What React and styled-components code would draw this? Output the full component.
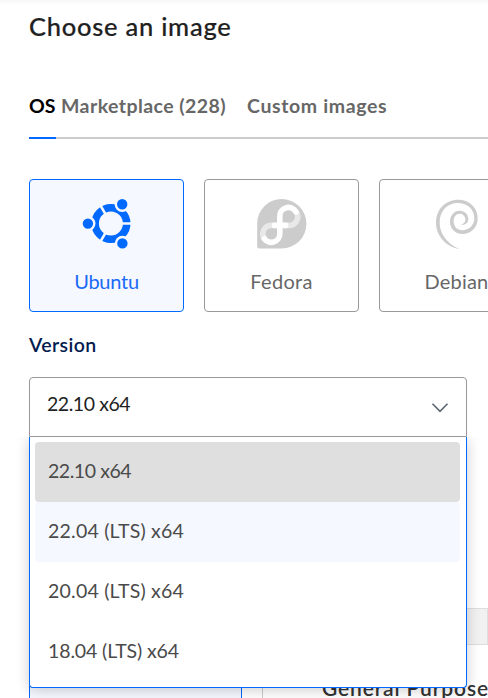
import React from "react";
import styled, { createGlobalStyle, css } from "styled-components";

const GlobalStyle = createGlobalStyle`
  *, *::before, *::after { box-sizing: border-box; }
  body {
    margin: 0;
    background: #fff;
    font-family: Lato, "Open Sans", sans-serif;
    overflow: hidden;
  }
`;

const Page = styled.main`
  width: 488px;
  height: 698px;
  padding-left: 29px;
  overflow: hidden;
  background: linear-gradient(#f7f7f7, #fff 5px);
`;

const Title = styled.h1`
  margin: 0;
  padding-top: 11px;
  height: 94px;
  font-size: 25.5px;
  line-height: 30px;
  font-weight: 500;
  letter-spacing: 0.74px;
  color: #1f1f1f;
  -webkit-text-stroke: 0.2px #1f1f1f;
  white-space: nowrap;
`;

const Tabs = styled.nav`
  display: flex;
  height: 45px;
  border-bottom: 2px solid #ccc;
`;

const Tab = styled.button`
  flex: none;
  height: 45px;
  margin: 0 ${(p) => p.$gap}px 0 0;
  padding: 0 0 20px;
  border: 0;
  border-bottom: 2px solid ${(p) => (p.$active ? "#0069ff" : "transparent")};
  background: none;
  font: 700 19.5px/24px Lato, sans-serif;
  letter-spacing: ${(p) => p.$track}px;
  color: ${(p) => (p.$active ? "#000" : "#676767")};
  white-space: nowrap;
  width: ${(p) => p.$width}px;
  text-align: left;
`;

const Distros = styled.div`
  display: flex;
  gap: 20px;
  margin-top: 40px;
`;

const DistroCard = styled.button`
  flex: none;
  display: flex;
  flex-direction: column;
  align-items: center;
  width: 155px;
  height: 133px;
  padding: 18px 0 0;
  border: 1px solid #999;
  border-radius: 4px;
  background: #fff;
  color: #676767;
  font: 400 20px/26px Lato, sans-serif;
  letter-spacing: ${(p) => p.$track}px;
  ${(p) =>
    p.$selected &&
    css`
      border-color: #0069ff;
      background: #f5f8ff;
      color: #1a6af5;
    `}
`;

const Logo = styled.svg`
  display: block;
  width: 52px;
  height: 52px;
  margin-bottom: 18px;
`;

const FieldLabel = styled.h2`
  margin: 20px 0 0;
  height: 45px;
  font-size: 19.5px;
  line-height: 26px;
  font-weight: 600;
  letter-spacing: 0.4px;
  color: #031b4e;
`;

const Select = styled.div`
  position: relative;
  display: flex;
  justify-content: space-between;
  width: 438px;
  height: 60px;
  padding: 13px 17px 0;
  border: 1px solid #999;
  border-radius: 4px 4px 0 0;
  background: #fff;
  font-size: 19.5px;
  line-height: 26px;
  letter-spacing: -0.45px;
  color: #1f1f1f;
`;

const Chevron = styled.svg`
  width: 18px;
  height: 12px;
  margin-top: 11px;
`;

const Menu = styled.ul`
  position: absolute;
  z-index: 2;
  top: 59px;
  left: -1px;
  width: 438px;
  height: 251px;
  margin: 0;
  padding: 5px 6px 5px 5px;
  list-style: none;
  border: 1px solid #0069ff;
  border-top: 0;
  border-radius: 0 0 4px 4px;
  background: #fff;
  box-shadow: 0 2px 14px rgba(0, 0, 0, 0.2);
  clip-path: inset(0 -24px -24px -24px);
`;

const Option = styled.li`
  height: 60px;
  padding: 16px 13px;
  border-radius: 4px;
  background: ${(p) => p.$fill || "transparent"};
  letter-spacing: ${(p) => p.$track}px;
  color: #4a4a4a;
`;

const Plans = styled.section`
  margin-top: 171px;
`;

const PlanBand = styled.div`
  height: 37px;
  border: 1px solid #dedede;
  background: #f1f1f1;
`;

const PlanCards = styled.div`
  display: flex;
  gap: 20px;
  margin-top: 20px;
`;

const PlanCard = styled.article`
  flex: none;
  width: ${(p) => p.$width}px;
  height: 100px;
  padding: 9px 0 0 59px;
  border: 1px solid ${(p) => (p.$selected ? "#0069ff" : "#ccc")};
  border-top-color: transparent;
  background: ${(p) => (p.$selected ? "#f5f8ff" : "#fff")};
  font-size: 21px;
  line-height: 26px;
  font-weight: 600;
  letter-spacing: 0.85px;
  color: #333;
  white-space: nowrap;
`;

function UbuntuLogo() {
  return (
    <Logo viewBox="0 0 52 52">
      <circle cx="29.9" cy="25.5" r="15.8" fill="none" stroke="#0069ff" strokeWidth="7.6" />
      <path
        d="M29.9 25.5H52M29.9 25.5 18.9 6.5M29.9 25.5 18.9 44.5"
        stroke="#f5f8ff"
        strokeWidth="2.5"
      />
      <g fill="#0069ff" stroke="#f5f8ff" strokeWidth="2.4">
        <circle cx="6.9" cy="25.6" r="6.4" />
        <circle cx="41.2" cy="6.3" r="6.4" />
        <circle cx="41.4" cy="45.4" r="6.4" />
      </g>
    </Logo>
  );
}

function FedoraLogo() {
  return (
    <Logo viewBox="-1.2 -1 52 52">
      <path d="M24.5 0A24.6 24.6 0 1 1 24.5 49.4H2Q0 49.4 0 47.4V24.5A24.5 24.5 0 0 1 24.5 0Z" fill="#ccc" />
      <g fill="none" strokeWidth="5.6" strokeLinecap="round">
        <path
          d="M17 26.4H14.1A8.5 8.5 0 0 0 7.2 39.8M38.8 12.6A8.7 8.7 0 0 1 31.4 26.4H28"
          stroke="#e8e8e8"
        />
        <path
          d="M7.2 39.8A8.5 8.5 0 0 0 22.6 34.9V18A8.7 8.7 0 0 1 38.8 12.8M17.4 26.4H28.4"
          stroke="#fff"
        />
      </g>
    </Logo>
  );
}

function DebianLogo() {
  return (
    <Logo viewBox="189 84 156 156">
      <path
        fill="#ccc"
        d="M273 237C235 230 204 198 204 158C204 118 233 89 270 89C304 89 329 112 329 145C329 173 309 192 283 192C260 192 246 174 246 155C246 136 258 122 275 122C291 122 301 133 301 147C301 158 293 166 279 164C289 161 293 154 292 147C291 137 284 131 275 131C264 131 257 141 257 154C257 169 267 181 283 181C303 181 319 166 319 145C319 118 298 99 270 99C238 99 215 122 215 158C215 192 238 220 273 237Z"
      />
    </Logo>
  );
}

export default function App() {
  return (
    <>
      <GlobalStyle />
      <Page>
        <Title>Choose an image</Title>
        <Tabs>
          <Tab $active $width={27} $gap={5} $track={0.1}>OS</Tab>
          <Tab $width={166} $gap={20} $track={0.43}>Marketplace (228)</Tab>
          <Tab $width={142} $gap={0} $track={0.63}>Custom images</Tab>
        </Tabs>
        <Distros>
          <DistroCard $selected $track={-0.25}>
            <UbuntuLogo />
            Ubuntu
          </DistroCard>
          <DistroCard $track={0.3}>
            <FedoraLogo />
            Fedora
          </DistroCard>
          <DistroCard $track={0.2}>
            <DebianLogo />
            Debian
          </DistroCard>
        </Distros>
        <FieldLabel>Version</FieldLabel>
        <Select>
          22.10 x64
          <Chevron viewBox="0 0 18 12">
            <path d="M1.5 1.8 9 9.4l7.5-7.6" fill="none" stroke="#5b6573" strokeWidth="1.6" />
          </Chevron>
          <Menu>
            <Option $fill="#dfdfdf" $track={-0.45}>22.10 x64</Option>
            <Option $fill="#f5f8ff" $track={0.22}>22.04 (LTS) x64</Option>
            <Option $track={0.22}>20.04 (LTS) x64</Option>
            <Option $track={-0.12}>18.04 (LTS) x64</Option>
          </Menu>
        </Select>
        <Plans>
          <PlanBand />
          <PlanCards>
            <PlanCard $selected $width={213} />
            <PlanCard $width={260}>General Purpose</PlanCard>
          </PlanCards>
        </Plans>
      </Page>
    </>
  );
}
